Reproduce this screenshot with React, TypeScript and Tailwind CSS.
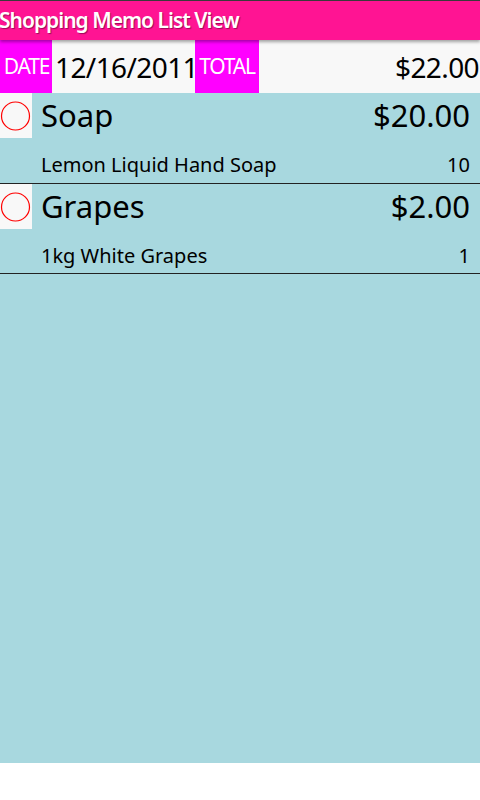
import React from "react";

const items = [
  { name: "Soap", price: "$20.00", desc: "Lemon Liquid Hand Soap", qty: "10", h: "h-[91px]" },
  { name: "Grapes", price: "$2.00", desc: "1kg White Grapes", qty: "1", h: "h-[90px]" },
];

function Radio() {
  return (
    <div className="w-[32px] h-[45px] bg-[#f8f8f8] flex items-center justify-center shrink-0">
      <svg width="32" height="32" viewBox="0 0 32 32">
        <circle cx="15.5" cy="16" r="14" fill="none" stroke="#ff0000" strokeWidth="1.2" />
      </svg>
    </div>
  );
}

export default function App() {
  return (
    <div className="w-[480px] h-[800px] bg-white flex flex-col" style={{ fontFamily: '"Noto Sans", "Open Sans", sans-serif' }}>
      <div className="relative h-[40px] bg-[#ff1493] border-t border-[#3a3a3a] flex items-center shrink-0 z-10 shadow-[0_2px_3px_rgba(0,0,0,0.35)]">
        <span className="text-white text-[21px] font-semibold tracking-[-1px] [text-shadow:1px_1px_1px_rgba(0,0,0,0.4)] leading-none -ml-[1px]">
          Shopping Memo List View
        </span>
      </div>
      <div className="h-[53px] flex bg-[#f8f8f8] shrink-0">
        <div className="w-[52px] bg-[#ff00ff] text-white text-[21px] tracking-[-1.2px] flex items-center justify-center pl-[1px]">DATE</div>
        <div className="w-[143px] flex items-center text-[28px] text-black tracking-[-0.6px] pl-[3px]">12/16/2011</div>
        <div className="w-[64px] bg-[#ff00ff] text-white text-[21px] tracking-[-1.2px] flex items-center justify-center">TOTAL</div>
        <div className="flex-1 flex items-center justify-end text-[28px] text-black tracking-[-0.6px] pr-[1px]">$22.00</div>
      </div>
      <div className="h-[670px] bg-[#a8d8df] flex flex-col">
        {items.map((it) => (
          <div key={it.name} className={`${it.h} flex flex-col border-b border-[#222222]`}>
            <div className="flex h-[45px] shrink-0">
              <Radio />
              <div className="flex-1 flex items-center justify-between pl-[9px] pr-[10px] text-[31px] text-black leading-none">
                <span>{it.name}</span>
                <span>{it.price}</span>
              </div>
            </div>
            <div className="flex-1 flex items-center justify-between pl-[41px] pr-[10px] text-[20px] text-black leading-none pt-[9px]">
              <span>{it.desc}</span>
              <span>{it.qty}</span>
            </div>
          </div>
        ))}
      </div>
    </div>
  );
}
